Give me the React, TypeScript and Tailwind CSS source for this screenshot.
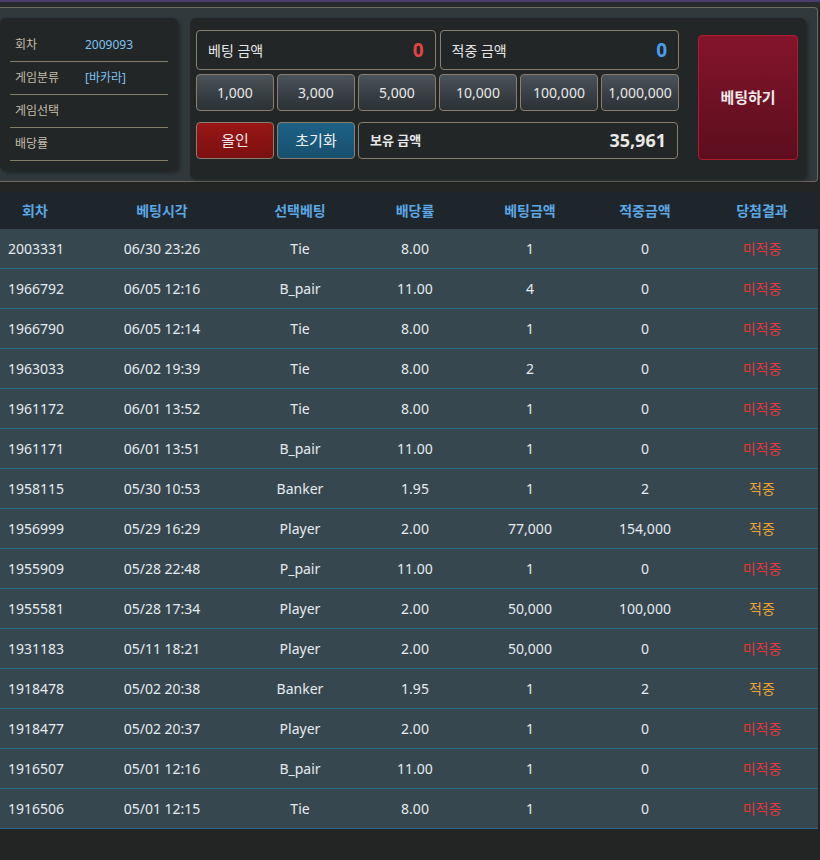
import React from 'react';

type Bet = {
  round: string;
  time: string;
  pick: string;
  odds: string;
  amount: string;
  win: string;
  hit: boolean;
};

const bets: Bet[] = [
  { round: '2003331', time: '06/30 23:26', pick: 'Tie', odds: '8.00', amount: '1', win: '0', hit: false },
  { round: '1966792', time: '06/05 12:16', pick: 'B_pair', odds: '11.00', amount: '4', win: '0', hit: false },
  { round: '1966790', time: '06/05 12:14', pick: 'Tie', odds: '8.00', amount: '1', win: '0', hit: false },
  { round: '1963033', time: '06/02 19:39', pick: 'Tie', odds: '8.00', amount: '2', win: '0', hit: false },
  { round: '1961172', time: '06/01 13:52', pick: 'Tie', odds: '8.00', amount: '1', win: '0', hit: false },
  { round: '1961171', time: '06/01 13:51', pick: 'B_pair', odds: '11.00', amount: '1', win: '0', hit: false },
  { round: '1958115', time: '05/30 10:53', pick: 'Banker', odds: '1.95', amount: '1', win: '2', hit: true },
  { round: '1956999', time: '05/29 16:29', pick: 'Player', odds: '2.00', amount: '77,000', win: '154,000', hit: true },
  { round: '1955909', time: '05/28 22:48', pick: 'P_pair', odds: '11.00', amount: '1', win: '0', hit: false },
  { round: '1955581', time: '05/28 17:34', pick: 'Player', odds: '2.00', amount: '50,000', win: '100,000', hit: true },
  { round: '1931183', time: '05/11 18:21', pick: 'Player', odds: '2.00', amount: '50,000', win: '0', hit: false },
  { round: '1918478', time: '05/02 20:38', pick: 'Banker', odds: '1.95', amount: '1', win: '2', hit: true },
  { round: '1918477', time: '05/02 20:37', pick: 'Player', odds: '2.00', amount: '1', win: '0', hit: false },
  { round: '1916507', time: '05/01 12:16', pick: 'B_pair', odds: '11.00', amount: '1', win: '0', hit: false },
  { round: '1916506', time: '05/01 12:15', pick: 'Tie', odds: '8.00', amount: '1', win: '0', hit: false },
];

const chips = ['1,000', '3,000', '5,000', '10,000', '100,000', '1,000,000'];

const info = [
  { label: '회차', value: '2009093' },
  { label: '게임분류', value: '[바카라]' },
  { label: '게임선택', value: '' },
  { label: '배당률', value: '' },
];

const gridCols = 'grid grid-cols-[70px_184px_92px_138px_92px_138px_1fr]';

export default function App() {
  return (
    <div className="min-h-screen w-[820px] bg-[#232525] font-['Noto_Sans','Noto_Sans_CJK_KR',sans-serif]">
      <div className="h-[2px] bg-[#4b3e6c]" />
      <div className="h-[5px] bg-[#272b2c]" />

      {/* top betting panel */}
      <div className="w-[818px] h-[175px] bg-[#30393b] border-y border-r border-[#6f6a5f] rounded-r-[4px] flex gap-[12px] pt-[10px]">
        <div className="w-[178px] h-[153px] bg-[#222627] rounded-[6px] shadow-[2px_2px_4px_rgba(0,0,0,0.35)] px-[10px] pt-[11px]">
          {info.map((row) => (
            <div key={row.label} className="flex items-center h-[33px] border-b border-[#857c6c] text-[12px]">
              <span className="w-[75px] pl-[5px] text-[#c4bcaa]">{row.label}</span>
              <span className="text-[#7fc4ee]">{row.value}</span>
            </div>
          ))}
        </div>

        <div className="w-[616px] h-[161px] bg-[#222626] rounded-[6px] shadow-[2px_2px_4px_rgba(0,0,0,0.35)] flex pl-[6px] pt-[12px]">
          <div className="w-[483px] flex flex-col">
            <div className="flex gap-[4px]">
              <div className="w-[240px] h-[40px] border border-[#8a7f6f] rounded-[4px] flex items-center justify-between px-[11px]">
                <span className="text-[14px] text-[#e6e6e6]">베팅 금액</span>
                <span className="text-[19px] font-bold text-[#e04444]">0</span>
              </div>
              <div className="w-[240px] h-[40px] border border-[#8a7f6f] rounded-[4px] flex items-center justify-between px-[11px]">
                <span className="text-[14px] text-[#e6e6e6]">적중 금액</span>
                <span className="text-[19px] font-bold text-[#4a9de8]">0</span>
              </div>
            </div>

            <div className="flex gap-[3px] mt-[4px]">
              {chips.map((c) => (
                <div
                  key={c}
                  className="w-[78px] h-[37px] rounded-[4px] border border-[#8a7f6f] bg-gradient-to-b from-[#4a5359] to-[#2b3135] flex items-center justify-center text-[14px] text-[#e8e8e8]"
                >
                  {c}
                </div>
              ))}
            </div>

            <div className="flex gap-[3px] mt-[11px]">
              <div className="w-[78px] h-[37px] rounded-[4px] border border-[#8a7f6f] bg-gradient-to-b from-[#991616] to-[#7c1010] flex items-center justify-center text-[15px] text-[#f0e8e8]">
                올인
              </div>
              <div className="w-[78px] h-[37px] rounded-[4px] border border-[#8a7f6f] bg-gradient-to-b from-[#1c6186] to-[#18506e] flex items-center justify-center text-[15px] text-[#eef2f4]">
                초기화
              </div>
              <div className="w-[320px] h-[37px] rounded-[4px] border border-[#8a7f6f] flex items-center justify-between pl-[11px] pr-[11px]">
                <span className="text-[13px] font-bold text-[#e8e8e8]">보유 금액</span>
                <span className="text-[18px] font-bold text-[#e8e8e8]">35,961</span>
              </div>
            </div>
          </div>

          <div className="ml-[19px] mt-[5px] w-[100px] h-[125px] rounded-[4px] border border-[#b01a2a] bg-gradient-to-b from-[#84142b] to-[#5c0e1e] flex items-center justify-center text-[15px] font-bold text-[#f2eaea]">
            베팅하기
          </div>
        </div>
      </div>

      {/* history table */}
      <div className="mt-[10px] w-[818px]">
        <div className={`${gridCols} h-[37px] items-center bg-[#1f262b] text-[14px] font-bold text-[#5aa7e4]`}>
          <div className="text-center">회차</div>
          <div className="text-center">베팅시각</div>
          <div className="text-center">선택베팅</div>
          <div className="text-center">배당률</div>
          <div className="text-center">베팅금액</div>
          <div className="text-center">적중금액</div>
          <div className="text-center pr-[8px]">당첨결과</div>
        </div>
        {bets.map((b) => (
          <div
            key={b.round}
            className={`${gridCols} h-[40px] items-center bg-[#37474f] border-b border-[#2c6a8a] text-[14px] text-[#e4ebef]`}
          >
            <div className="pl-[8px]">{b.round}</div>
            <div className="text-center">{b.time}</div>
            <div className="text-center">{b.pick}</div>
            <div className="text-center">{b.odds}</div>
            <div className="text-center">{b.amount}</div>
            <div className="text-center">{b.win}</div>
            <div className={`text-center pr-[8px] ${b.hit ? 'text-[#f0a236]' : 'text-[#e2373d]'}`}>
              {b.hit ? '적중' : '미적중'}
            </div>
          </div>
        ))}
      </div>
    </div>
  );
}
